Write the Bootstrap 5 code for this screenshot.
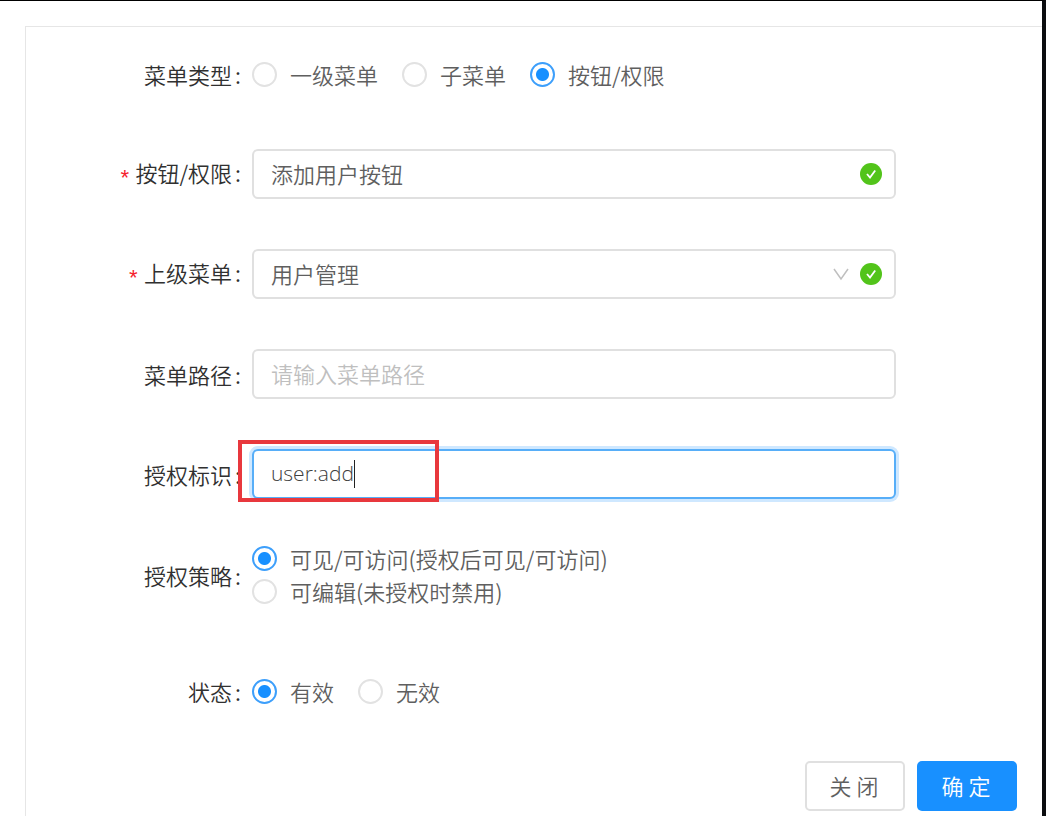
<!DOCTYPE html>
<html lang="zh-CN">
<head>
<meta charset="utf-8">
<meta name="viewport" content="width=device-width, initial-scale=1">
<title>菜单权限</title>
<link href="https://cdn.jsdelivr.net/npm/bootstrap@5.3.0/dist/css/bootstrap.min.css" rel="stylesheet">
<style>
  body {
    font-family: "Noto Sans CJK SC", "Open Sans", sans-serif;
    font-size: 22px;
    font-weight: 350;
    line-height: 32px;
    color: #5f5f5f;
    background: #fff;
  }
  .page-frame {
    border-top: 1px solid #000;
    border-right: 4px solid #0b0d0f;
    padding: 25px 0 0 25px;
  }
  .form-panel {
    border: solid #e6e6e6;
    border-width: 1px 0 0 1px;
    padding: 22px 25px 5px 0;
  }
  .form-line { min-height: 50px; margin-bottom: 50px; }
  .line-tall { margin: -7px 0 58px; }
  .line-label {
    flex: 0 0 22.8%;
    padding: 0 11px 0 0;
    text-align: right;
    color: #303030;
  }
  .line-label .colon { margin-left: 3px; }
  .star {
    font-family: "Liberation Mono", monospace;
    line-height: 1;
    vertical-align: -4px;
    color: #f5222d;
    margin-right: 4px;
  }
  .line-control { flex: 0 0 65%; }

  .field.form-control, .field.form-select {
    height: 50px;
    padding: 0 17px 2px;
    font-size: 22px;
    font-weight: 350;
    color: #5f5f5f;
    background: #fff;
    border: 2px solid #e0e0e0;
    border-radius: 6px;
  }
  .field.form-control::placeholder { color: #bfbfbf; opacity: 1; }
  .field.form-control.is-active {
    font-family: "Open Sans", sans-serif;
    font-size: 21px;
    font-weight: 300;
    color: #404040;
    border-color: #57aef8;
    box-shadow: 0 0 0 3px #cfe8ff;
    caret-color: transparent;
  }
  .field-icons { top: 0; bottom: 0; right: 14px; pointer-events: none; }
  .caret-bar { left: 102px; top: 11px; width: 1px; height: 28px; background: #222; }
  .highlight-box {
    left: -14px; top: -9px; width: 201px; height: 62px;
    border: 4px solid #e8383d;
    pointer-events: none;
  }

  .choice { display: inline-flex; align-items: center; gap: 13px; line-height: 33px; }
  .choice span { line-height: 33px; }
  .choice .form-check-input {
    width: 25px; height: 25px; margin: 0;
    border: 2px solid #e2e2e2;
    box-shadow: none;
  }
  .choice .form-check-input:checked {
    border-color: #3d9ffb;
    background: radial-gradient(circle, #1890ff 6px, #fff 7px);
  }
  .form-actions { padding-top: 45px; }
  .btn-wide {
    width: 100px; height: 50px; padding: 0 2px 2px 0;
    font-size: 22px; font-weight: 350;
    border-radius: 5px;
    white-space: pre;
  }
  .btn-close-form { border: 2px solid #e0e0e0; background: #fff; color: #5f5f5f; }
  .btn-save, .btn-save:hover { background: #1890ff; color: #fff; border: 0; }
</style>
</head>
<body>
<div class="page-frame min-vh-100 d-flex flex-column">
  <form class="form-panel flex-grow-1">

    <div class="form-line d-flex align-items-center" role="radiogroup" aria-labelledby="type-label">
      <div class="line-label" id="type-label">菜单类型<span class="colon">:</span></div>
      <div class="line-control d-flex gap-4">
        <label class="choice"><input class="form-check-input" type="radio" name="type"><span>一级菜单</span></label>
        <label class="choice"><input class="form-check-input" type="radio" name="type"><span>子菜单</span></label>
        <label class="choice"><input class="form-check-input" type="radio" name="type" checked><span>按钮/权限</span></label>
      </div>
    </div>

    <div class="form-line d-flex align-items-center">
      <label class="line-label" for="name"><span class="star">*</span>按钮/权限<span class="colon">:</span></label>
      <div class="line-control position-relative">
        <input class="form-control field" id="name" type="text" value="添加用户按钮">
        <div class="field-icons position-absolute d-flex align-items-center">
          <svg width="22" height="22" viewBox="0 0 22 22" aria-hidden="true"><circle cx="11" cy="11" r="11" fill="#52c41a"/><path d="M7 11l3 3.500 5.200-7" fill="none" stroke="#fff" stroke-width="1.800"/></svg>
        </div>
      </div>
    </div>

    <div class="form-line d-flex align-items-center">
      <label class="line-label" for="parent"><span class="star">*</span>上级菜单<span class="colon">:</span></label>
      <div class="line-control position-relative">
        <select class="form-select field" id="parent"><option>用户管理</option></select>
        <div class="field-icons position-absolute d-flex align-items-center">
          <svg class="me-2" width="22" height="22" viewBox="0 0 22 22" aria-hidden="true"><path d="M4 6l7 10 7-10" fill="none" stroke="#bfbfbf" stroke-width="1.500"/></svg>
          <svg width="22" height="22" viewBox="0 0 22 22" aria-hidden="true"><circle cx="11" cy="11" r="11" fill="#52c41a"/><path d="M7 11l3 3.500 5.200-7" fill="none" stroke="#fff" stroke-width="1.800"/></svg>
        </div>
      </div>
    </div>

    <div class="form-line d-flex align-items-center">
      <label class="line-label" for="path">菜单路径<span class="colon">:</span></label>
      <div class="line-control">
        <input class="form-control field" id="path" type="text" placeholder="请输入菜单路径">
      </div>
    </div>

    <div class="form-line d-flex align-items-center">
      <label class="line-label" for="perm">授权标识<span class="colon">:</span></label>
      <div class="line-control position-relative">
        <input class="form-control field is-active" id="perm" type="text" value="user:add">
        <span class="caret-bar position-absolute"></span>
        <span class="highlight-box position-absolute"></span>
      </div>
    </div>

    <div class="form-line line-tall d-flex align-items-center" role="radiogroup" aria-labelledby="policy-label">
      <div class="line-label" id="policy-label">授权策略<span class="colon">:</span></div>
      <div class="line-control d-flex flex-column align-items-start">
        <label class="choice"><input class="form-check-input" type="radio" name="policy" checked><span>可见/可访问(授权后可见/可访问)</span></label>
        <label class="choice"><input class="form-check-input" type="radio" name="policy"><span>可编辑(未授权时禁用)</span></label>
      </div>
    </div>

    <div class="form-line d-flex align-items-center mb-0" role="radiogroup" aria-labelledby="state-label">
      <div class="line-label" id="state-label">状态<span class="colon">:</span></div>
      <div class="line-control d-flex gap-4">
        <label class="choice"><input class="form-check-input" type="radio" name="state" checked><span>有效</span></label>
        <label class="choice"><input class="form-check-input" type="radio" name="state"><span>无效</span></label>
      </div>
    </div>

    <div class="form-actions d-flex justify-content-end gap-2">
      <button type="button" class="btn btn-wide btn-close-form me-1">关 闭</button>
      <button type="submit" class="btn btn-wide btn-save">确 定</button>
    </div>
  </form>
</div>
<script src="https://cdn.jsdelivr.net/npm/bootstrap@5.3.0/dist/js/bootstrap.bundle.min.js"></script>
</body>
</html>
